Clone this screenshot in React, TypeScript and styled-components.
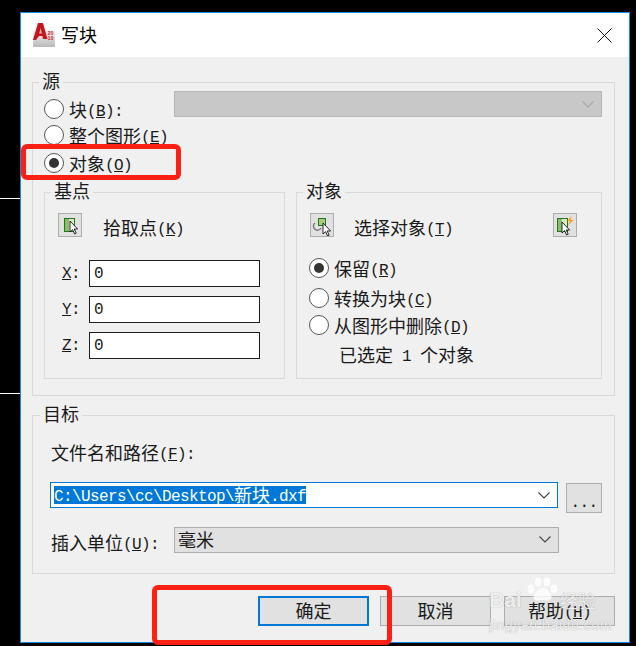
import React from "react";
import styled, { createGlobalStyle } from "styled-components";

const GlobalStyle = createGlobalStyle`
    html, body {
        margin: 0;
        padding: 0;
        background: #000;
    }
`;

const Screen = styled.div`
    position: relative;
    width: 636px;
    height: 646px;
    overflow: hidden;
    background: #000;
    padding: 12px 0 0 20px;
    box-sizing: border-box;
    font-family: "Noto Sans CJK SC", "Liberation Sans", sans-serif;
    font-size: 18px;
    line-height: 20px;
    color: #1a1a1a;
`;
const DrawingLine = styled.div<{ $top: number }>`
    position: absolute;
    left: 0;
    top: ${(p) => p.$top}px;
    width: 20px;
    height: 1px;
    background: #fff;
`;
const Dialog = styled.div`
    width: 610px;
    height: 631px;
    box-sizing: border-box;
    border: 1px solid #1688e0;
    background: #f0f0f0;
`;
const TitleBar = styled.div`
    display: flex;
    align-items: center;
    height: 44px;
    padding: 0 17px 0 11px;
    background: #fff;
`;
const Title = styled.span`
    margin-left: 5px;
    padding-bottom: 2px;
    color: #000;
`;
const CloseIcon = styled.svg`
    margin-left: auto;
`;
const Body = styled.div`
    padding: 25px 0 0 11px;
`;
const Group = styled.div<{ $height: number; $width?: number; $top?: number }>`
    position: relative;
    box-sizing: border-box;
    width: ${(p) => p.$width ?? 583}px;
    height: ${(p) => p.$height}px;
    margin-top: ${(p) => p.$top ?? 0}px;
    border: 1px solid #d9d9d9;
`;
const Legend = styled.span<{ $left: number }>`
    position: absolute;
    top: -12px;
    left: ${(p) => p.$left}px;
    padding: 0 3px;
    background: #f0f0f0;
    line-height: 18px;
`;
const SourceBody = styled.div`
    padding: 8px 12px 0 11px;
`;
const TopRow = styled.div`
    display: flex;
`;
const RadioColumn = styled.div`
    width: 130px;
    padding-top: 8px;
`;
const RadioRow = styled.div<{ $top?: number }>`
    display: flex;
    align-items: center;
    gap: 5px;
    height: 20px;
    margin-top: ${(p) => p.$top ?? 0}px;
`;
const RadioText = styled.span`
    height: 20px;
    margin-top: -1px;
    white-space: nowrap;
`;
const Radio = styled.span<{ $checked?: boolean }>`
    position: relative;
    flex: none;
    box-sizing: border-box;
    width: 20px;
    height: 20px;
    border: 1.4px solid #555;
    border-radius: 50%;
    background: #fff;
    &::after {
        content: "";
        display: ${(p) => (p.$checked ? "block" : "none")};
        position: absolute;
        left: 3.6px;
        top: 3.6px;
        width: 10px;
        height: 10px;
        border-radius: 50%;
        background: #333;
    }
`;
const Mono = styled.span`
    font-family: "Liberation Mono", monospace;
    font-size: 16px;
    letter-spacing: -0.6px;
    line-height: 1;
    white-space: pre;
    vertical-align: 1px;
`;
const DisabledSelect = styled.div`
    display: flex;
    align-items: center;
    justify-content: flex-end;
    box-sizing: border-box;
    width: 428px;
    height: 26px;
    padding-right: 7px;
    background: #c8c8c8;
    border: 1px solid #b6b6b6;
`;
const SubRow = styled.div`
    display: flex;
    gap: 11px;
    margin-top: 19px;
`;
const SubBody = styled.div`
    padding: 20px 13px 0;
`;
const PickRow = styled.div<{ $gap: number }>`
    display: flex;
    gap: ${(p) => p.$gap}px;
    height: 24px;
`;
const PickLabel = styled.span`
    height: 20px;
    padding-top: 4px;
    white-space: nowrap;
`;
const IconButton = styled.div<{ $push?: boolean }>`
    flex: none;
    width: 24px;
    height: 24px;
    box-sizing: border-box;
    border: 1px solid #adadad;
    background: #e1e1e1;
    margin-left: ${(p) => (p.$push ? "auto" : "0")};
    margin-right: ${(p) => (p.$push ? "11px" : "0")};
`;
const Fields = styled.div`
    display: grid;
    gap: 9px;
    margin-top: 23px;
    padding-left: 4px;
`;
const FieldRow = styled.div`
    display: flex;
    align-items: center;
`;
const FieldLabel = styled(Mono)`
    width: 27px;
`;
const FieldInput = styled.div`
    box-sizing: border-box;
    width: 171px;
    height: 27px;
    padding: 0 0 0 4px;
    border: 1px solid #1e1e1e;
    background: #fff;
    line-height: 20px;
`;
const KeepOptions = styled.div`
    margin: 21px 0 0 -1px;
`;
const SelectedNote = styled.div`
    height: 20px;
    margin: 9px 0 0 29px;
    white-space: pre;
`;
const TargetBody = styled.div`
    padding: 26px 12px 0 17px;
`;
const PathLabel = styled.div`
    height: 20px;
    padding-left: 1px;
`;
const PathRow = styled.div`
    display: flex;
    gap: 8px;
    height: 31px;
    margin-top: 20px;
`;
const PathCombo = styled.div`
    display: flex;
    align-items: center;
    justify-content: space-between;
    box-sizing: border-box;
    width: 509px;
    height: 26px;
    padding: 0 7px 0 3px;
    border: 1px solid #0078d7;
    background: #fff;
`;
const SelectedText = styled.span`
    display: block;
    height: 18px;
    background: #0078d7;
    color: #fff;
    line-height: 17px;
    white-space: pre;
`;
const BrowseButton = styled.div`
    box-sizing: border-box;
    width: 36px;
    height: 30px;
    margin-top: 1px;
    border: 1px solid #adadad;
    background: #e1e1e1;
    text-align: center;
    line-height: 32px;
`;
const UnitRow = styled.div`
    display: flex;
    align-items: flex-start;
    margin-top: 14px;
`;
const UnitLabel = styled.span`
    width: 123px;
    height: 20px;
    padding: 5px 0 0 1px;
    white-space: nowrap;
`;
const UnitSelect = styled.div`
    display: flex;
    align-items: center;
    justify-content: space-between;
    box-sizing: border-box;
    width: 385px;
    height: 26px;
    padding: 0 7px 2px 3px;
    border: 1px solid #adadad;
    background: #e1e1e1;
`;
const Footer = styled.div`
    display: flex;
    justify-content: flex-end;
    gap: 11px;
    width: 583px;
    margin-top: 22px;
`;
const DialogButton = styled.div<{ $primary?: boolean }>`
    box-sizing: border-box;
    width: 111px;
    height: 30px;
    line-height: ${(p) => (p.$primary ? 25 : 27)}px;
    text-align: center;
    background: #e1e1e1;
    border: ${(p) => (p.$primary ? "2px solid #0078d7" : "1px solid #adadad")};
`;
const HelpButton = styled(DialogButton)`
    margin-left: 2px;
`;
const Callout = styled.div<{ $x: number; $y: number; $w: number; $h: number }>`
    position: absolute;
    left: ${(p) => p.$x}px;
    top: ${(p) => p.$y}px;
    width: ${(p) => p.$w}px;
    height: ${(p) => p.$h}px;
    box-sizing: border-box;
    border: 5px solid #fb2014;
    border-radius: 6px;
`;
const Watermark = styled.div`
    position: absolute;
    left: 489px;
    top: 577px;
    width: 116px;
    color: rgba(255, 255, 255, 0.85);
    text-shadow: 0 0 1px rgba(110, 110, 110, 0.7);
    font-family: "Liberation Sans", "Noto Sans CJK SC", sans-serif;
`;
const WatermarkBrand = styled.div`
    display: flex;
    align-items: flex-end;
    height: 34px;
    font-size: 21px;
    font-weight: 700;
    line-height: 22px;
`;
const PawIcon = styled.svg`
    flex: none;
    align-self: flex-start;
    margin-left: 3px;
`;
const WatermarkCn = styled.span`
    margin-left: -1px;
    font-family: "Noto Sans CJK SC", sans-serif;
    font-size: 18px;
    font-weight: 400;
    white-space: nowrap;
`;
const WatermarkUrl = styled.div`
    margin-top: 6px;
    font-size: 14px;
    line-height: 16px;
    letter-spacing: 0.6px;
    white-space: nowrap;
`;

function Key(props: { k: string; suffix?: string }) {
    return <Mono>(<u>{props.k}</u>){props.suffix}</Mono>;
}

function Chevron(props: { color: string }) {
    return (
        <svg width="12" height="7" viewBox="0 0 12 7">
            <polyline points="0.5,0.5 6,6 11.5,0.5" fill="none" stroke={props.color} strokeWidth="1.1" />
        </svg>
    );
}

function Cursor(props: { x: number; y: number }) {
    return (
        <path
            transform={`translate(${props.x} ${props.y})`}
            d="M0 0 L0 11 L2.6 8.6 L4.6 13 L6.2 12.2 L4.2 8 L7.6 8 Z"
            fill="#fff"
            stroke="#111"
            strokeWidth="0.9"
        />
    );
}

function PickPointIcon() {
    return (
        <svg width="22" height="22" viewBox="1 1 22 22">
            <rect x="6.5" y="5.5" width="10" height="13" fill="#dfe8c6" stroke="#1c7a1c" />
            <rect x="7" y="6" width="4" height="12" fill="#8dbb6a" />
            <Cursor x={12} y={8} />
        </svg>
    );
}

function SelectObjectIcon() {
    return (
        <svg width="22" height="22" viewBox="1 1 22 22">
            <path d="M5 10 A4 4 0 1 0 11 15" fill="none" stroke="#777" strokeWidth="1.4" />
            <rect x="8.5" y="5.5" width="7" height="7" fill="#a5cc7c" stroke="#1c7a1c" />
            <Cursor x={13} y={10} />
        </svg>
    );
}

function QuickSelectIcon() {
    return (
        <svg width="22" height="22" viewBox="1 1 22 22">
            <rect x="4.5" y="5.5" width="10" height="13" fill="#dfe8c6" stroke="#1c7a1c" />
            <rect x="5" y="6" width="4" height="12" fill="#8dbb6a" />
            <path d="M18.5 3 L14.5 8 L17 8 L15 12.5 L20.5 7 L17.8 7 Z" fill="#f5a313" />
            <Cursor x={9} y={9} />
        </svg>
    );
}

function AppLogo() {
    return (
        <svg width="24" height="24" viewBox="0 0 24 24">
            <defs>
                <linearGradient id="logoBase" x1="0" y1="0" x2="0" y2="1">
                    <stop offset="0" stopColor="#f4f4f4" />
                    <stop offset="1" stopColor="#b9b9b9" />
                </linearGradient>
            </defs>
            <path d="M1 8 L23 8 L23 24 L1 24 Z" fill="url(#logoBase)" />
            <path d="M6 0 L11 0 L15.5 16 L11 16 L10.4 13 L7 13 L4 17 L1 17 Z" fill="#c4161c" />
            <path d="M8.6 5 L9.9 10.5 L7.2 10.5 Z" fill="#efb5b0" />
            <text x="15.5" y="12" fontFamily="Liberation Sans" fontSize="5.5" fontWeight="700" fill="#c4262c">20</text>
            <text x="15.5" y="16.5" fontFamily="Liberation Sans" fontSize="5.5" fontWeight="700" fill="#c4262c">10</text>
        </svg>
    );
}

function Paw() {
    return (
        <PawIcon width="36" height="24" viewBox="0 0 36 24" fill="rgba(255,255,255,0.8)">
            <ellipse cx="6" cy="12" rx="3.4" ry="4.4" />
            <ellipse cx="13" cy="5" rx="3.4" ry="4.6" />
            <ellipse cx="22" cy="5" rx="3.4" ry="4.6" />
            <ellipse cx="29" cy="12" rx="3.4" ry="4.4" />
            <path d="M17.5 11 C22 11 24 15 26 18 C28 22 24 24 21 23.4 C19 23 16 23 14 23.4 C11 24 7 22 9 18 C11 15 13 11 17.5 11 Z" />
        </PawIcon>
    );
}

export default function App() {
    return (
        <Screen>
            <GlobalStyle />
            <DrawingLine $top={198} />
            <DrawingLine $top={393} />
            <Dialog>
                <TitleBar>
                    <AppLogo />
                    <Title>写块</Title>
                    <CloseIcon width="15" height="15" viewBox="0 0 15 15">
                        <path d="M0.5 0.5 L14.5 14.5 M14.5 0.5 L0.5 14.5" stroke="#111" strokeWidth="1" />
                    </CloseIcon>
                </TitleBar>
                <Body>
                    <Group $height={314}>
                        <Legend $left={6}>源</Legend>
                        <SourceBody>
                            <TopRow>
                                <RadioColumn>
                                    <RadioRow><Radio /><RadioText>块<Key k="B" suffix=":" /></RadioText></RadioRow>
                                    <RadioRow $top={6}><Radio /><RadioText>整个图形<Key k="E" /></RadioText></RadioRow>
                                    <RadioRow $top={8}><Radio $checked /><RadioText>对象<Key k="O" /></RadioText></RadioRow>
                                </RadioColumn>
                                <DisabledSelect><Chevron color="#a8a8a8" /></DisabledSelect>
                            </TopRow>
                            <SubRow>
                                <Group $width={241} $height={187}>
                                    <Legend $left={6}>基点</Legend>
                                    <SubBody>
                                        <PickRow $gap={21}>
                                            <IconButton><PickPointIcon /></IconButton>
                                            <PickLabel>拾取点<Key k="K" /></PickLabel>
                                        </PickRow>
                                        <Fields>
                                            <FieldRow><FieldLabel><u>X</u>:</FieldLabel><FieldInput><Mono>0</Mono></FieldInput></FieldRow>
                                            <FieldRow><FieldLabel><u>Y</u>:</FieldLabel><FieldInput><Mono>0</Mono></FieldInput></FieldRow>
                                            <FieldRow><FieldLabel><u>Z</u>:</FieldLabel><FieldInput><Mono>0</Mono></FieldInput></FieldRow>
                                        </Fields>
                                    </SubBody>
                                </Group>
                                <Group $width={306} $height={187}>
                                    <Legend $left={6}>对象</Legend>
                                    <SubBody>
                                        <PickRow $gap={20}>
                                            <IconButton><SelectObjectIcon /></IconButton>
                                            <PickLabel>选择对象<Key k="T" /></PickLabel>
                                            <IconButton $push><QuickSelectIcon /></IconButton>
                                        </PickRow>
                                        <KeepOptions>
                                            <RadioRow><Radio $checked /><RadioText>保留<Key k="R" /></RadioText></RadioRow>
                                            <RadioRow $top={10}><Radio /><RadioText>转换为块<Key k="C" /></RadioText></RadioRow>
                                            <RadioRow $top={7}><Radio /><RadioText>从图形中删除<Key k="D" /></RadioText></RadioRow>
                                        </KeepOptions>
                                        <SelectedNote>已选定<Mono> 1 </Mono>个对象</SelectedNote>
                                    </SubBody>
                                </Group>
                            </SubRow>
                        </SourceBody>
                    </Group>
                    <Group $height={159} $top={19}>
                        <Legend $left={7}>目标</Legend>
                        <TargetBody>
                            <PathLabel>文件名和路径<Key k="F" suffix=":" /></PathLabel>
                            <PathRow>
                                <PathCombo>
                                    <SelectedText><Mono>C:\Users\cc\Desktop\</Mono>新块<Mono>.dxf</Mono></SelectedText>
                                    <Chevron color="#444" />
                                </PathCombo>
                                <BrowseButton><Mono>...</Mono></BrowseButton>
                            </PathRow>
                            <UnitRow>
                                <UnitLabel>插入单位<Key k="U" suffix=":" /></UnitLabel>
                                <UnitSelect>
                                    <span>毫米</span>
                                    <Chevron color="#444" />
                                </UnitSelect>
                            </UnitRow>
                        </TargetBody>
                    </Group>
                    <Footer>
                        <DialogButton $primary>确定</DialogButton>
                        <DialogButton>取消</DialogButton>
                        <HelpButton>帮助<Key k="H" /></HelpButton>
                    </Footer>
                </Body>
            </Dialog>
            <Callout $x={21} $y={144} $w={160} $h={36} />
            <Callout $x={152} $y={585} $w={240} $h={60} />
            <Watermark>
                <WatermarkBrand>
                    <span>Bai</span>
                    <Paw />
                    <WatermarkCn>经验</WatermarkCn>
                </WatermarkBrand>
                <WatermarkUrl>jingyan.baidu.com</WatermarkUrl>
            </Watermark>
        </Screen>
    );
}
